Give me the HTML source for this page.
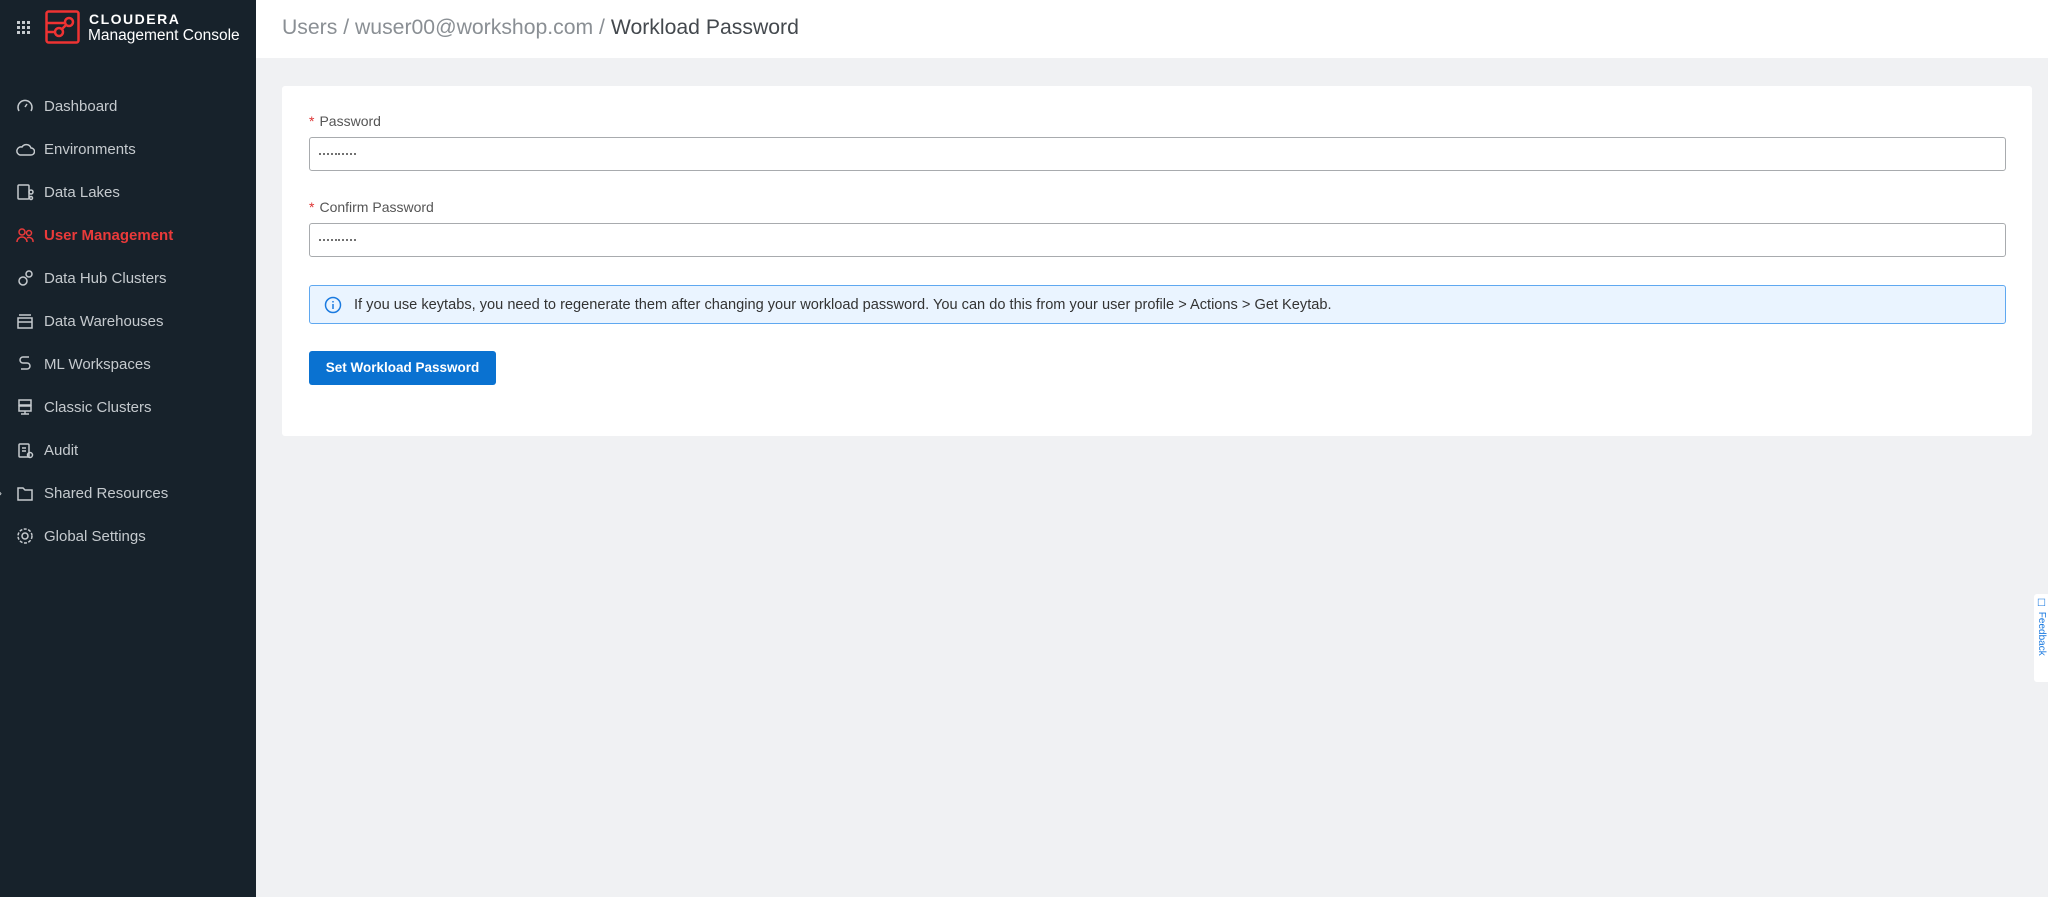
<!DOCTYPE html>
<html><head><meta charset="utf-8"><style>
*{box-sizing:border-box;margin:0;padding:0}
body{width:2048px;height:897px;background:#f0f1f3;font-family:"Liberation Sans",Arial,sans-serif;position:relative;overflow:hidden}
.sb{position:absolute;left:0;top:0;width:256px;height:897px;background:#17222b}
.hd{position:absolute;left:256px;top:0;right:0;height:58px;background:#fff;font-size:21.2px;color:#8a8f94;padding:16px 0 0 26px}
.hd b{font-weight:normal;color:#44494e}
.nav{position:absolute;left:0;width:256px;height:40px;display:flex;align-items:center;color:#c5cace;font-size:15px}
.nav svg{position:absolute;left:15px;width:20px;height:20px;fill:none;stroke:#c5cace;stroke-width:1.5}
.nav span{position:absolute;left:44px}
.act{color:#ea3a3a;font-weight:bold}.act svg{stroke:#ea3a3a}
.card{position:absolute;left:282px;top:86px;width:1750px;height:350px;background:#fff;border-radius:3px}
.lbl{position:absolute;left:309px;font-size:14px;color:#555}
.lbl i{color:#d33;font-style:normal;margin-right:5px}
.inp{position:absolute;left:309px;width:1697px;height:34px;border:1px solid #a8abae;border-radius:3px}
.dots{position:absolute;left:9px;top:15px;display:flex;gap:1.9px}
.dots b{width:2px;height:2px;background:#444;border-radius:1px}
.info{position:absolute;left:309px;top:285px;width:1697px;height:39px;border:1px solid #5fa8f0;background:#eaf4ff;border-radius:3px;font-size:14.6px;color:#333;padding:11px 0 0 44px}
.btn{position:absolute;left:309px;top:351px;width:187px;height:34px;background:#0a72d1;border-radius:3px;color:#fff;font-size:13.5px;font-weight:bold;text-align:center;line-height:34px}
</style></head><body>
<div class="sb">
<svg style="position:absolute;left:17px;top:21px" width="14" height="14"><g fill="#c5cace"><rect x="0" y="0" width="3" height="3"/><rect x="5" y="0" width="3" height="3"/><rect x="10" y="0" width="3" height="3"/><rect x="0" y="5" width="3" height="3"/><rect x="5" y="5" width="3" height="3"/><rect x="10" y="5" width="3" height="3"/><rect x="0" y="10" width="3" height="3"/><rect x="5" y="10" width="3" height="3"/><rect x="10" y="10" width="3" height="3"/></g></svg>
<svg style="position:absolute;left:45px;top:10px" width="35" height="34" fill="none" stroke="#e33" stroke-width="2.5"><rect x="1.5" y="1.5" width="32" height="31" rx="2"/><path d="M2 13h18M2 22h8"/><circle cx="24" cy="12" r="4"/><circle cx="14" cy="22" r="4"/><path d="M21 15l-4 4"/></svg>
<div style="position:absolute;left:89px;top:11px;color:#fff;font-size:14px;font-weight:bold;letter-spacing:1.5px">CLOUDERA</div>
<div style="position:absolute;left:88px;top:27px;color:#fff;font-size:15.5px">Management Console</div>
<div class="nav" style="top:86px"><svg viewBox="0 0 20 20"><path d="M4 15a7 7 0 1 1 12 0"/><path d="M10 11l2-3"/></svg><span>Dashboard</span></div>
<div class="nav" style="top:129px"><svg viewBox="0 0 20 20"><path d="M5 16h11a3.5 3.5 0 0 0 0-7 5 5 0 0 0-9-1A4 4 0 0 0 5 16z"/></svg><span>Environments</span></div>
<div class="nav" style="top:172px"><svg viewBox="0 0 20 20"><rect x="3" y="3" width="11" height="14" rx="1"/><circle cx="16" cy="10" r="2"/><circle cx="16" cy="16" r="1.5"/></svg><span>Data Lakes</span></div>
<div class="nav act" style="top:215px"><svg viewBox="0 0 20 20"><circle cx="7" cy="7" r="3"/><circle cx="14" cy="8" r="2.5"/><path d="M2 17a5 5 0 0 1 10 0M12 13a4 4 0 0 1 6 4"/></svg><span>User Management</span></div>
<div class="nav" style="top:258px"><svg viewBox="0 0 20 20"><circle cx="8" cy="13" r="4"/><circle cx="14" cy="6" r="3"/></svg><span>Data Hub Clusters</span></div>
<div class="nav" style="top:301px"><svg viewBox="0 0 20 20"><path d="M4 4h12M3 7h14v10H3zM3 11h14"/></svg><span>Data Warehouses</span></div>
<div class="nav" style="top:344px"><svg viewBox="0 0 20 20"><path d="M14 3H8a3 3 0 0 0 0 6h4a3 3 0 0 1 0 6H6"/></svg><span>ML Workspaces</span></div>
<div class="nav" style="top:387px"><svg viewBox="0 0 20 20"><rect x="4" y="3" width="12" height="5"/><rect x="4" y="9" width="12" height="5"/><path d="M10 14v3M6 17h8"/></svg><span>Classic Clusters</span></div>
<div class="nav" style="top:430px"><svg viewBox="0 0 20 20"><rect x="4" y="4" width="10" height="13" rx="1"/><path d="M7 8h4M7 11h4"/><circle cx="15" cy="15" r="2.5"/></svg><span>Audit</span></div>
<div class="nav" style="top:473px"><svg viewBox="0 0 20 20"><path d="M3 5h5l2 2h7v10H3z"/></svg><span>Shared Resources</span><div style="position:absolute;left:-2px;color:#c5cace;font-size:12px">›</div></div>
<div class="nav" style="top:516px"><svg viewBox="0 0 20 20"><circle cx="10" cy="10" r="3"/><circle cx="10" cy="10" r="7" stroke-dasharray="3 1.5"/></svg><span>Global Settings</span></div>
</div>
<div class="hd">Users / wuser00@workshop.com / <b>Workload Password</b></div>
<div class="card"></div>
<div class="lbl" style="top:113px"><i>*</i>Password</div>
<div class="inp" style="top:137px"><div class="dots"><b></b><b></b><b></b><b></b><b></b><b></b><b></b><b></b><b></b><b></b></div></div>
<div class="lbl" style="top:199px"><i>*</i>Confirm Password</div>
<div class="inp" style="top:223px"><div class="dots"><b></b><b></b><b></b><b></b><b></b><b></b><b></b><b></b><b></b><b></b></div></div>
<div class="info"><svg style="position:absolute;left:14px;top:10px" width="18" height="18" fill="none" stroke="#1a7ae0" stroke-width="1.5"><circle cx="9" cy="9" r="7.5"/><path d="M9 8v5M9 5v1.5"/></svg>If you use keytabs, you need to regenerate them after changing your workload password. You can do this from your user profile &gt; Actions &gt; Get Keytab.</div>
<div class="btn">Set Workload Password</div>
<div style="position:absolute;left:2034px;top:594px;width:14px;height:88px;background:#fff;border-radius:3px 0 0 3px"><div style="position:absolute;left:2px;top:4px;writing-mode:vertical-rl;font-size:10px;color:#1a7ae0">☐ Feedback</div></div>
</body></html>
